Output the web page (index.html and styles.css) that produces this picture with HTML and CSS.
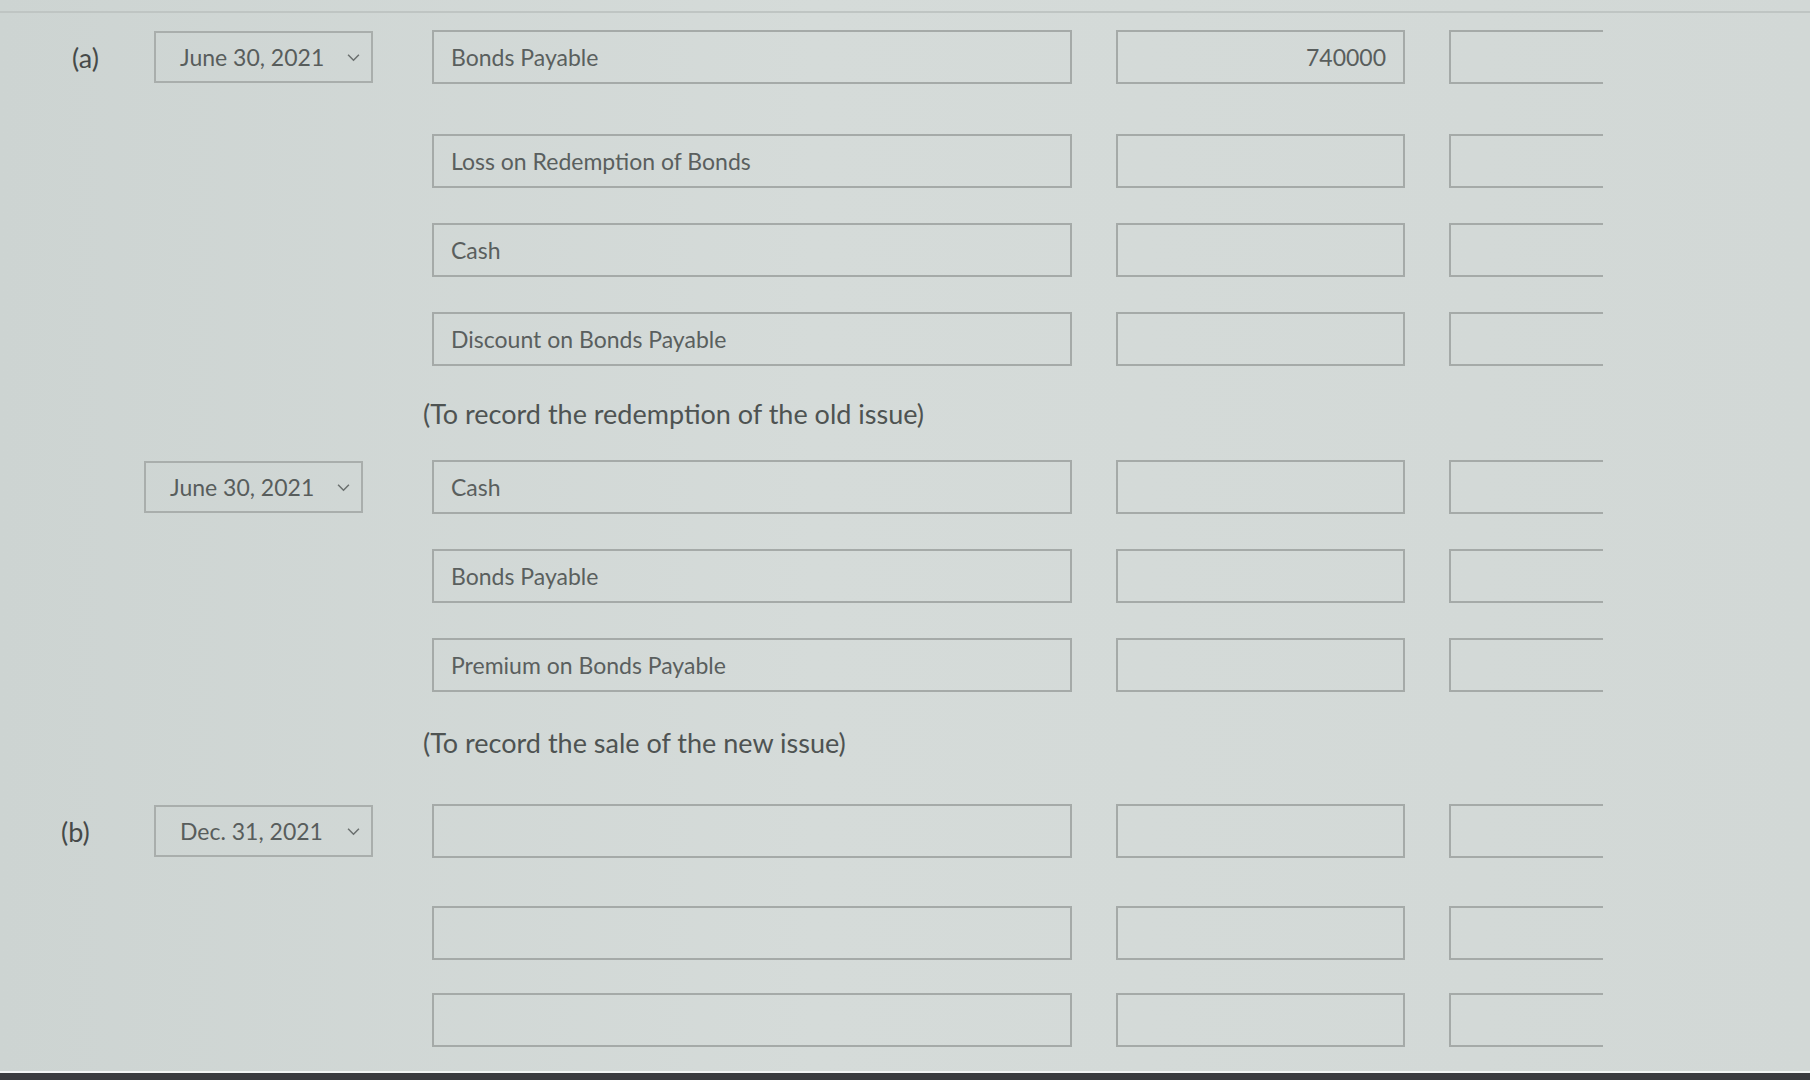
FILE: index.html
```html
<!DOCTYPE html>
<html>
<head>
<meta charset="utf-8">
<link rel="stylesheet" href="styles.css">
</head>
<body>
<div class="screen">
  <div class="sheet">
    <div class="row row-first">
      <div class="part">(a)</div>
      <div class="date"><span>June 30, 2021</span><svg class="chev" viewBox="0 0 12 8"><path d="M1 1.5 L6 6.5 L11 1.5" fill="none" stroke="#6a6f6e" stroke-width="1.4"/></svg></div>
      <div class="acct">Bonds Payable</div>
      <div class="amt">740000</div>
      <div class="clip"><div class="amt2"></div></div>
    </div>
    <div class="row">
      <div class="part"></div><div class="nodate"></div>
      <div class="acct">Loss on Redemption of Bonds</div>
      <div class="amt"></div>
      <div class="clip"><div class="amt2"></div></div>
    </div>
    <div class="row">
      <div class="part"></div><div class="nodate"></div>
      <div class="acct">Cash</div>
      <div class="amt"></div>
      <div class="clip"><div class="amt2"></div></div>
    </div>
    <div class="row">
      <div class="part"></div><div class="nodate"></div>
      <div class="acct">Discount on Bonds Payable</div>
      <div class="amt"></div>
      <div class="clip"><div class="amt2"></div></div>
    </div>
    <div class="note note-1">(To record the redemption of the old issue)</div>

    <div class="row">
      <div class="part"></div>
      <div class="date date-left"><span>June 30, 2021</span><svg class="chev" viewBox="0 0 12 8"><path d="M1 1.5 L6 6.5 L11 1.5" fill="none" stroke="#6a6f6e" stroke-width="1.4"/></svg></div>
      <div class="acct">Cash</div>
      <div class="amt"></div>
      <div class="clip"><div class="amt2"></div></div>
    </div>
    <div class="row">
      <div class="part"></div><div class="nodate"></div>
      <div class="acct">Bonds Payable</div>
      <div class="amt"></div>
      <div class="clip"><div class="amt2"></div></div>
    </div>
    <div class="row">
      <div class="part"></div><div class="nodate"></div>
      <div class="acct">Premium on Bonds Payable</div>
      <div class="amt"></div>
      <div class="clip"><div class="amt2"></div></div>
    </div>
    <div class="note note-2">(To record the sale of the new issue)</div>

    <div class="row row-b">
      <div class="part part-b">(b)</div>
      <div class="date"><span>Dec. 31, 2021</span><svg class="chev" viewBox="0 0 12 8"><path d="M1 1.5 L6 6.5 L11 1.5" fill="none" stroke="#6a6f6e" stroke-width="1.4"/></svg></div>
      <div class="acct"></div>
      <div class="amt"></div>
      <div class="clip"><div class="amt2"></div></div>
    </div>
    <div class="row row-b2">
      <div class="part"></div><div class="nodate"></div>
      <div class="acct"></div>
      <div class="amt"></div>
      <div class="clip"><div class="amt2"></div></div>
    </div>
    <div class="row row-b3">
      <div class="part"></div><div class="nodate"></div>
      <div class="acct"></div>
      <div class="amt"></div>
      <div class="clip"><div class="amt2"></div></div>
    </div>
  </div>
  <div class="bezel"></div>
</div>
</body>
</html>
```

FILE: styles.css
```css
html, body {
  margin: 0;
  padding: 0;
}
body {
  width: 1810px;
  height: 1080px;
  overflow: hidden;
  background: #d2d8d6;
  font-family: Lato, "Open Sans", sans-serif;
  color: #525756;
}
.screen {
  height: 1080px;
  display: flex;
  flex-direction: column;
  background: linear-gradient(90deg, #cdd4d2 0%, #d5dbd9 45%, #d2d8d6 100%);
}
.sheet {
  flex: 1;
  min-height: 0;
  overflow: hidden;
  margin-top: 11px;
  border-top: 2px solid #bfc5c3;
  padding-top: 17px;
}
.row {
  display: grid;
  grid-template-columns: 110px 219px 655px 289px 154px;
  column-gap: 44px;
  align-items: center;
  height: 54px;
  margin-bottom: 35px;
}
.row-first {
  margin-bottom: 50px;
}
.part {
  font-size: 27px;
  padding-left: 72px;
  color: #464a49;
  white-space: nowrap;
  margin-right: -44px;
}
.part-b {
  padding-left: 61px;
}
.date {
  box-sizing: border-box;
  height: 52px;
  border: 2px solid #a9aeac;
  display: flex;
  align-items: center;
  justify-content: space-between;
  padding: 0 11px 0 24px;
  font-size: 23px;
  color: #585d5c;
}
.date-left {
  margin-left: -10px;
  margin-right: 10px;
}
.chev {
  width: 13px;
  height: 9px;
}
.acct {
  box-sizing: border-box;
  height: 54px;
  margin-left: 15px;
  border: 2px solid #a5aaa8;
  display: flex;
  align-items: center;
  padding-left: 17px;
  font-size: 23px;
  color: #5a5f5e;
}
.amt {
  box-sizing: border-box;
  height: 54px;
  border: 2px solid #a5aaa8;
  display: flex;
  align-items: center;
  justify-content: flex-end;
  padding-right: 17px;
  font-size: 23px;
  color: #595e5d;
}
.clip {
  height: 54px;
  overflow: hidden;
}
.amt2 {
  box-sizing: border-box;
  width: 200px;
  height: 54px;
  border: 2px solid #a5aaa8;
}
.note {
  font-size: 27px;
  line-height: 32px;
  padding-left: 423px;
  color: #4e5352;
}
.note-1 {
  margin-top: -3px;
  margin-bottom: 30px;
}
.note-2 {
  margin-top: 14px;
  margin-bottom: 45px;
}
.row-b {
  margin-bottom: 48px;
}
.row-b3 {
  margin-top: -2px;
  margin-bottom: 0;
}
.bezel {
  flex: none;
  height: 7px;
  border-top: 2px solid #f2f4f4;
  background: #3a3b3f;
}
```
